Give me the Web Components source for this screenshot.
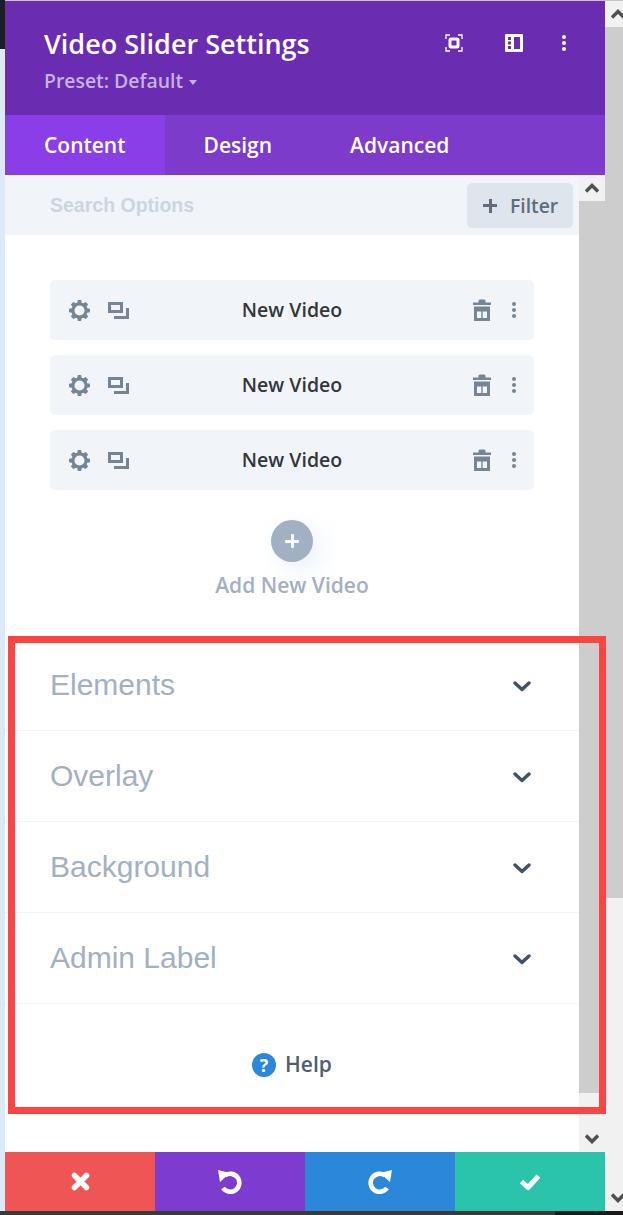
<!DOCTYPE html>
<html>
<head>
<meta charset="utf-8">
<title>Video Slider Settings</title>
<style>
  html, body { margin: 0; height: 100%; overflow: hidden; background: #fff; }
  body { font-family: "Open Sans", sans-serif; }
</style>
</head>
<body>
<settings-window></settings-window>

<script>
const ICONS = {
  gear: `<svg width="21" height="21" viewBox="0 0 20 20"><path fill="currentColor" fill-rule="evenodd" d="M8.400 0h3.200l.5 2.600 1.500.6 2.200-1.400 2.400 2.400-1.400 2.200.6 1.500 2.600.5v3.200l-2.600.5-.6 1.500 1.400 2.200-2.400 2.400-2.200-1.400-1.500.6-.5 2.600H8.400l-.5-2.600-1.500-.6-2.200 1.400-2.400-2.400 1.400-2.200-.6-1.500L0 11.600V8.400l2.600-.5.6-1.500-1.400-2.200 2.400-2.400 2.200 1.400 1.500-.6zM10 5.200a4.800 4.800 0 100 9.600 4.800 4.800 0 000-9.600z"/></svg>`,
  copy: `<svg width="22" height="20" viewBox="0 0 22 20" fill="none" stroke="currentColor" stroke-width="3"><rect x="2.500" y="3.500" width="12" height="8"/><path d="M7 17.500h13.500V8"/></svg>`,
  trash: `<svg width="18" height="22" viewBox="0 0 18 22" fill="currentColor"><path d="M0 3.500h5.500V1.500L6.500.5h5l1 1v2H18V6H0z"/><path fill-rule="evenodd" d="M1 7.500h16V22H1zM4 12.500v6.500h4.300v-6.500zm5.700 0v6.500H14v-6.500z"/></svg>`,
  dots: `<svg width="4" height="16" viewBox="0 0 4 16" fill="currentColor"><circle cx="2" cy="2" r="2"/><circle cx="2" cy="8" r="2"/><circle cx="2" cy="14" r="2"/></svg>`,
  chevron: `<svg width="18" height="11" viewBox="0 0 18 11" fill="none" stroke="currentColor" stroke-width="3.400" stroke-linecap="round" stroke-linejoin="round"><path d="M2 2l7 6.500L16 2"/></svg>`,
  expand: `<svg width="18" height="18" viewBox="0 0 18 18" fill="none" stroke="currentColor" stroke-width="1.300"><path d="M1 5V1h4M13 1h4v4M17 13v4h-4M5 17H1v-4"/><rect x="5" y="5" width="8" height="8" rx="1" stroke-width="3"/></svg>`,
  sidebar: `<svg width="18" height="18" viewBox="0 0 18 18" fill="currentColor"><path fill-rule="evenodd" d="M1 0h16a1 1 0 011 1v16a1 1 0 01-1 1H1a1 1 0 01-1-1V1a1 1 0 011-1zm8 3v12h6V3zM3 3v3h3V3zm0 4.500v3h3v-3zM3 12v3h3v-3z"/></svg>`,
  close: `<svg width="19" height="19" viewBox="0 0 19 19" fill="none" stroke="currentColor" stroke-width="5.500" stroke-linecap="round"><path d="M3.500 3.500l12 12M15.500 3.500l-12 12"/></svg>`,
  undo: `<svg width="24" height="24" viewBox="0 0 24 24"><path fill="none" stroke="currentColor" stroke-width="4.600" d="M7 5.500A9 9 0 115 18"/><path fill="currentColor" d="M0 0l12 3L2 12z"/></svg>`,
  redo: `<svg width="24" height="24" viewBox="0 0 24 24"><path fill="none" stroke="currentColor" stroke-width="4.600" d="M17 5.500A9 9 0 1019 18"/><path fill="currentColor" d="M24 0l-12 3 10 9z"/></svg>`,
  check: `<svg width="22" height="18" viewBox="0 0 22 18" fill="none" stroke="currentColor" stroke-width="5" stroke-linejoin="round"><path d="M2.500 8.500l6.500 6L19.500 3"/></svg>`,
  arrow: `<svg width="14" height="10" viewBox="0 0 14 10" fill="none" stroke="currentColor" stroke-width="3.400"><path d="M1 8.500l6-6 6 6"/></svg>`,
  arrowDown: `<svg width="14" height="10" viewBox="0 0 14 10" fill="none" stroke="currentColor" stroke-width="3.400"><path d="M1 1.500l6 6 6-6"/></svg>`
};

class ModuleItem extends HTMLElement {
  constructor() {
    super();
    this.attachShadow({ mode: "open" });
    this.shadowRoot.innerHTML = `
      <style>
        :host { display: grid; grid-template-columns: 100px 1fr 100px; align-items: center; height: 60px; box-sizing: border-box; background: #f1f5f9; border-radius: 5px; color: #758595; }
        .left { display: flex; align-items: center; gap: 17px; padding-left: 19px; }
        .right { display: flex; align-items: center; justify-content: flex-end; gap: 21px; padding-right: 18px; }
        svg { display: block; }
        .name { text-align: center; font: 600 19.500px/24px "Open Sans", sans-serif; color: #32373c; }
      </style>
      <div class="left">${ICONS.gear}${ICONS.copy}</div>
      <div class="name"><slot></slot></div>
      <div class="right">${ICONS.trash}${ICONS.dots}</div>
    `;
  }
}

class ToggleRow extends HTMLElement {
  constructor() {
    super();
    this.attachShadow({ mode: "open" });
    this.shadowRoot.innerHTML = `
      <style>
        :host { display: flex; align-items: center; justify-content: space-between; height: 91px; box-sizing: border-box; padding: 0 48px 0 45px; border-bottom: 1px solid #f1f5f9; color: #a3b0c2; font: 30px/34px "Liberation Sans", Arial, sans-serif; }
        .arrow { display: flex; margin-top: 2px; color: #3f5269; }
      </style>
      <slot></slot>
      <span class="arrow">${ICONS.chevron}</span>
    `;
  }
}

class ActionButton extends HTMLElement {
  constructor() {
    super();
    this.attachShadow({ mode: "open" });
    this.shadowRoot.innerHTML = `
      <style>
        :host { display: flex; align-items: center; justify-content: center; background: var(--bg); color: #fff; }
        svg { display: block; }
      </style>
      ${ICONS[this.getAttribute("icon")]}
    `;
  }
}

class ScrollBar extends HTMLElement {
  constructor() {
    super();
    this.attachShadow({ mode: "open" });
    this.shadowRoot.innerHTML = `
      <style>
        :host { display: flex; flex-direction: column; background: #f1f1f1; color: #505050; height: 100%; overflow: hidden; }
        .btn { flex: none; height: var(--btn, 26px); width: 26px; display: flex; align-items: center; justify-content: center; }
        .track { flex: 1; min-height: 0; display: flex; flex-direction: column; }
        .thumb { background: #cdcdcd; height: var(--thumb); }
      </style>
      <div class="btn">${ICONS.arrow}</div>
      <div class="track"><div class="thumb"></div></div>
      <div class="btn">${ICONS.arrowDown}</div>
    `;
  }
}

class SettingsHeader extends HTMLElement {
  constructor() {
    super();
    this.attachShadow({ mode: "open" });
    this.shadowRoot.innerHTML = `
      <style>
        :host { display: flex; justify-content: space-between; height: 114px; box-sizing: border-box; padding: 25px 39px 0 39px; background: #6a2cb0; color: #fff; }
        h1 { margin: 0; font: 600 27px/36px "Open Sans", sans-serif; }
        .preset { margin-top: 7px; font: 600 19.400px/24px "Open Sans", sans-serif; color: #c8b0e4; display: flex; align-items: center; gap: 6px; }
        .caret { width: 0; height: 0; border: 4px solid transparent; border-top: 5px solid #c8b0e4; border-bottom: 0; margin-top: 2px; }
        .icons { display: flex; height: 18px; align-items: center; margin-top: 8px; }
        .icons svg:nth-child(2) { margin: 0 39px 0 42px; }
        svg { display: block; }
      </style>
      <div>
        <h1><slot></slot></h1>
        <div class="preset">Preset: Default<span class="caret"></span></div>
      </div>
      <div class="icons">${ICONS.expand}${ICONS.sidebar}${ICONS.dots}</div>
    `;
  }
}

class SettingsTabs extends HTMLElement {
  constructor() {
    super();
    this.attachShadow({ mode: "open" });
    this.shadowRoot.innerHTML = `
      <style>
        :host { display: flex; height: 60px; background: #7c3bcb; color: #fff; font: 600 21px/60px "Open Sans", sans-serif; }
        span { padding: 0 39px; }
        .active { background: #8a3ee8; }
      </style>
      <span class="active">Content</span><span>Design</span><span>Advanced</span>
    `;
  }
}

class SearchBar extends HTMLElement {
  constructor() {
    super();
    this.attachShadow({ mode: "open" });
    this.shadowRoot.innerHTML = `
      <style>
        :host { display: flex; align-items: center; justify-content: space-between; height: 60px; box-sizing: border-box; padding: 0 6px 0 45px; background: #f1f5f9; }
        .hint { font: 700 19.500px/24px "Liberation Sans", Arial, sans-serif; color: #ccd5df; }
        .filter { display: flex; align-items: center; gap: 13px; width: 106px; height: 45px; margin-top: 1px; box-sizing: border-box; padding-left: 16px; border-radius: 5px; background: #dfe5ec; color: #5d6d7e; font: 600 19.300px/24px "Open Sans", sans-serif; }
        .plus { position: relative; width: 14px; height: 14px; }
        .plus::before, .plus::after { content: ""; position: absolute; background: #5d6d7e; }
        .plus::before { left: 0; right: 0; top: 5.500px; height: 3px; }
        .plus::after { top: 0; bottom: 0; left: 5.500px; width: 3px; }
      </style>
      <span class="hint">Search Options</span>
      <div class="filter"><span class="plus"></span>Filter</div>
    `;
  }
}

class AddButton extends HTMLElement {
  constructor() {
    super();
    this.attachShadow({ mode: "open" });
    this.shadowRoot.innerHTML = `
      <style>
        :host { display: flex; flex-direction: column; align-items: center; gap: 10px; padding-top: 30px; color: #a3b0c2; font: 600 21px/27px "Open Sans", sans-serif; }
        .circle { position: relative; width: 42px; height: 42px; border-radius: 50%; background: #a2b0c4; box-shadow: 8px 8px 24px rgba(120, 170, 230, .16); }
        .circle::before, .circle::after { content: ""; position: absolute; background: #fff; border-radius: 1px; }
        .circle::before { left: 14px; right: 14px; top: 19.500px; height: 3px; }
        .circle::after { top: 14px; bottom: 14px; left: 19.500px; width: 3px; }
      </style>
      <div class="circle"></div>
      <slot></slot>
    `;
  }
}

class HelpLink extends HTMLElement {
  constructor() {
    super();
    this.attachShadow({ mode: "open" });
    this.shadowRoot.innerHTML = `
      <style>
        :host { display: flex; align-items: center; justify-content: center; gap: 9px; color: #4f5e70; font: 600 21px/27px "Open Sans", sans-serif; }
        .q { width: 24px; height: 24px; border-radius: 50%; background: #2b87da; color: #fff; text-align: center; font: 700 18px/24px "Open Sans", sans-serif; }
      </style>
      <span class="q">?</span><slot></slot>
    `;
  }
}

class SettingsWindow extends HTMLElement {
  constructor() {
    super();
    this.attachShadow({ mode: "open" });
    this.shadowRoot.innerHTML = `
      <style>
        :host { display: grid; grid-template-columns: 5px 600px 18px; grid-template-rows: 1211px; width: 623px; height: 1215px; position: relative; overflow: hidden; background: #fff; }
        .edge { background: #dceaf7; position: relative; }
        .edge::before { content: ""; display: block; height: 49px; background: #1b1f21; }
        .modal { display: flex; flex-direction: column; padding-top: 1px; box-sizing: border-box; min-height: 0; }
        .body { flex: 1; min-height: 0; display: grid; grid-template-columns: 574px 26px; }
        .content { min-width: 0; overflow: hidden; }
        .items { display: flex; flex-direction: column; gap: 15px; padding: 45px 45px 0 45px; }
        .toggles { margin-top: 41px; }
        .help { margin-top: 47px; }
        .actions { display: grid; grid-template-columns: repeat(4, 150px); flex: none; height: 59px; }
        .page-bar { --btn: 27px; --thumb: 871px; }
        .inner-bar { --thumb: 892px; }
        .marker { position: absolute; left: 8px; top: 636px; width: 598px; height: 478px; box-sizing: border-box; border: 7px solid #fe4343; pointer-events: none; }
        .top { position: absolute; left: 5px; right: 0; top: 0; height: 1px; background: #c6c6ba; }
        .bottom { position: absolute; left: 0; right: 0; bottom: 0; height: 4px; background: linear-gradient(90deg, #3a3a3a 555px, #1b1b1b 555px); }
      </style>
      <div class="edge"></div>
      <div class="modal">
        <settings-header>Video Slider Settings</settings-header>
        <settings-tabs></settings-tabs>
        <div class="body">
          <div class="content">
            <search-bar></search-bar>
            <div class="items">
              <module-item>New Video</module-item>
              <module-item>New Video</module-item>
              <module-item>New Video</module-item>
            </div>
            <add-button>Add New Video</add-button>
            <div class="toggles">
              <toggle-row>Elements</toggle-row>
              <toggle-row>Overlay</toggle-row>
              <toggle-row>Background</toggle-row>
              <toggle-row>Admin Label</toggle-row>
            </div>
            <help-link class="help">Help</help-link>
          </div>
          <scroll-bar class="inner-bar"></scroll-bar>
        </div>
        <div class="actions">
          <action-button icon="close" style="--bg:#ef5555"></action-button>
          <action-button icon="undo" style="--bg:#7e3bd0"></action-button>
          <action-button icon="redo" style="--bg:#2b87da"></action-button>
          <action-button icon="check" style="--bg:#29c4a9"></action-button>
        </div>
      </div>
      <scroll-bar class="page-bar"></scroll-bar>
      <div class="marker"></div>
      <div class="top"></div>
      <div class="bottom"></div>
    `;
  }
}

customElements.define("module-item", ModuleItem);
customElements.define("toggle-row", ToggleRow);
customElements.define("action-button", ActionButton);
customElements.define("scroll-bar", ScrollBar);
customElements.define("settings-header", SettingsHeader);
customElements.define("settings-tabs", SettingsTabs);
customElements.define("search-bar", SearchBar);
customElements.define("add-button", AddButton);
customElements.define("help-link", HelpLink);
customElements.define("settings-window", SettingsWindow);
</script>
</body>
</html>
